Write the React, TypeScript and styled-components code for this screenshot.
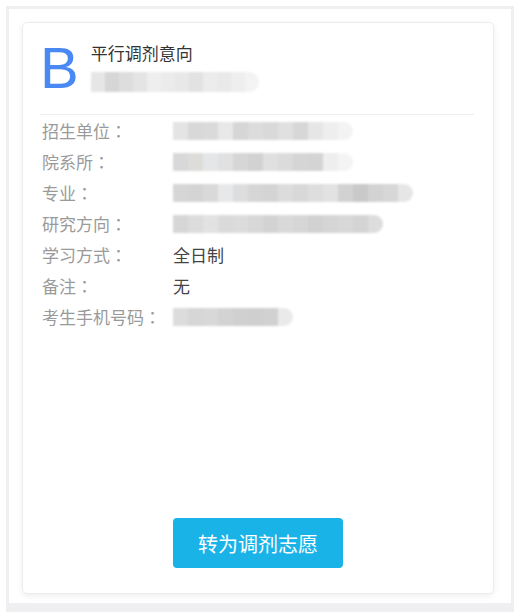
import React from 'react';
import styled, { createGlobalStyle } from 'styled-components';

const GlobalStyle = createGlobalStyle`
  body {
    margin: 0;
    background: #fff;
    font-family: "Noto Sans CJK SC", "Liberation Sans", sans-serif;
  }
`;

const Page = styled.div`
  padding: 6px;
  width: 508px;
`;

const Frame = styled.div`
  box-sizing: border-box;
  width: 508px;
  height: 606px;
  background: #fff;
  border: 3px solid #efeff1;
  border-bottom-width: 9px;
  padding: 13px 17px 9px 13px;
`;

const Card = styled.div`
  box-sizing: border-box;
  height: 100%;
  border: 1px solid #ececec;
  border-radius: 5px;
  box-shadow: 0 2px 6px rgba(0, 0, 0, 0.07);
  padding: 16px 19px 25px 17px;
  display: flex;
  flex-direction: column;
`;

const Header = styled.div`
  display: flex;
  align-items: flex-start;
  gap: 12px;
  padding-bottom: 17px;
  border-bottom: 1px solid #eeeeee;
`;

const Badge = styled.div`
  font-family: "Liberation Sans", Arial, sans-serif;
  font-size: 58px;
  line-height: 58px;
  color: #4a89f3;
`;

const HeadText = styled.div`
  display: flex;
  flex-direction: column;
  padding-top: 2px;
`;

const Title = styled.div`
  font-size: 17px;
  line-height: 23px;
  color: #333;
`;

const Row = styled.div`
  display: flex;
  align-items: center;
  height: 31px;
  font-size: 17px;
`;

const Label = styled.div`
  width: 133px;
  flex: none;
  color: #9a9a9a;
  padding-left: 2px;
  box-sizing: border-box;
`;

// centred full-width colon, as the reference renders it
const Colon = styled.span`
  font-family: "Noto Sans CJK TC", "Noto Sans CJK SC", sans-serif;
`;

const Value = styled.div`
  color: #444;
`;

const Smudge = styled.div<{ $h: number }>`
  display: flex;
  height: ${(p) => p.$h}px;
  filter: blur(1.2px);
  border-radius: 0 ${(p) => p.$h / 2}px ${(p) => p.$h / 2}px 0;
  overflow: hidden;
`;

const Cell = styled.div<{ $tone: string; $w: number }>`
  width: ${(p) => p.$w}px;
  background: ${(p) => p.$tone};
`;

const Footer = styled.div`
  margin-top: auto;
  padding-left: 2px;
  display: flex;
  justify-content: center;
`;

const Action = styled.button`
  width: 170px;
  height: 50px;
  border: none;
  border-radius: 4px;
  background: #1ab3e8;
  color: #fff;
  font-family: inherit;
  font-size: 20px;
  cursor: pointer;
`;

const Blur: React.FC<{ tones: string[]; h?: number; w?: number; mt?: number }> = ({
  tones,
  h = 18,
  w = 15,
  mt = 0,
}) => (
  <Smudge $h={h} style={{ marginTop: mt }}>
    {tones.map((t, i) => (
      <Cell key={i} $tone={t} $w={w} />
    ))}
  </Smudge>
);

const rows: { label: string; value?: string; tones?: string[] }[] = [
  { label: '招生单位', tones: ['#e4e4e4', '#d8d8d8', '#dadada', '#e8e8e8', '#d6d6d6', '#dcdcdc', '#d9d9d9', '#e0e0e0', '#d7d7d7', '#e6e6e6', '#eeeeee', '#f3f3f3'] },
  { label: '院系所', tones: ['#d8d8d8', '#dddcd9', '#e4e6e8', '#e1e1e1', '#d6d6d6', '#d2d2d2', '#e0e0e0', '#dbdbdb', '#d5d5d5', '#d4d4d4', '#eeeeee', '#f4f4f4'] },
  { label: '专业', tones: ['#d6d6d6', '#d4d4d4', '#d9d9d9', '#e6e8ea', '#dddddd', '#d6d6d6', '#d4d4d4', '#dcdcdc', '#d8d8d8', '#dedede', '#e2e2e2', '#d2d2d2', '#c9c9c9', '#d3d3d3', '#d7d7d7', '#e6e6e6'] },
  { label: '研究方向', tones: ['#d6d6d6', '#dcdcdc', '#e2e2e2', '#dadada', '#dcdcdc', '#d8d8d8', '#d3d3d3', '#d9d9d9', '#d6d6d6', '#d2d2d2', '#d5d5d5', '#d8d8d8', '#d4d4d4', '#dddddd'] },
  { label: '学习方式', value: '全日制' },
  { label: '备注', value: '无' },
  { label: '考生手机号码', tones: ['#dcdcdc', '#d6d6d6', '#d8d8d8', '#d3d3d3', '#d0d0d0', '#cfcfcf', '#d1d1d1', '#eaeaea'] },
];

export default function App() {
  return (
    <Page>
      <GlobalStyle />
      <Frame>
        <Card>
          <Header>
            <Badge>B</Badge>
            <HeadText>
              <Title>平行调剂意向</Title>
              <Blur
                mt={8}
                h={20}
                w={14}
                tones={['#e6e6e6', '#d6d6d6', '#dddddd', '#e4e4e4', '#eeeeee', '#ebebeb', '#e8e8e8', '#e2e2e2', '#ececec', '#e9e9e9', '#eeeeee', '#f3f3f3']}
              />
            </HeadText>
          </Header>
          {rows.map((r) => (
            <Row key={r.label}>
              <Label>
                {r.label}
                <Colon>：</Colon>
              </Label>
              {r.value ? <Value>{r.value}</Value> : <Blur tones={r.tones || []} />}
            </Row>
          ))}
          <Footer>
            <Action>转为调剂志愿</Action>
          </Footer>
        </Card>
      </Frame>
    </Page>
  );
}
